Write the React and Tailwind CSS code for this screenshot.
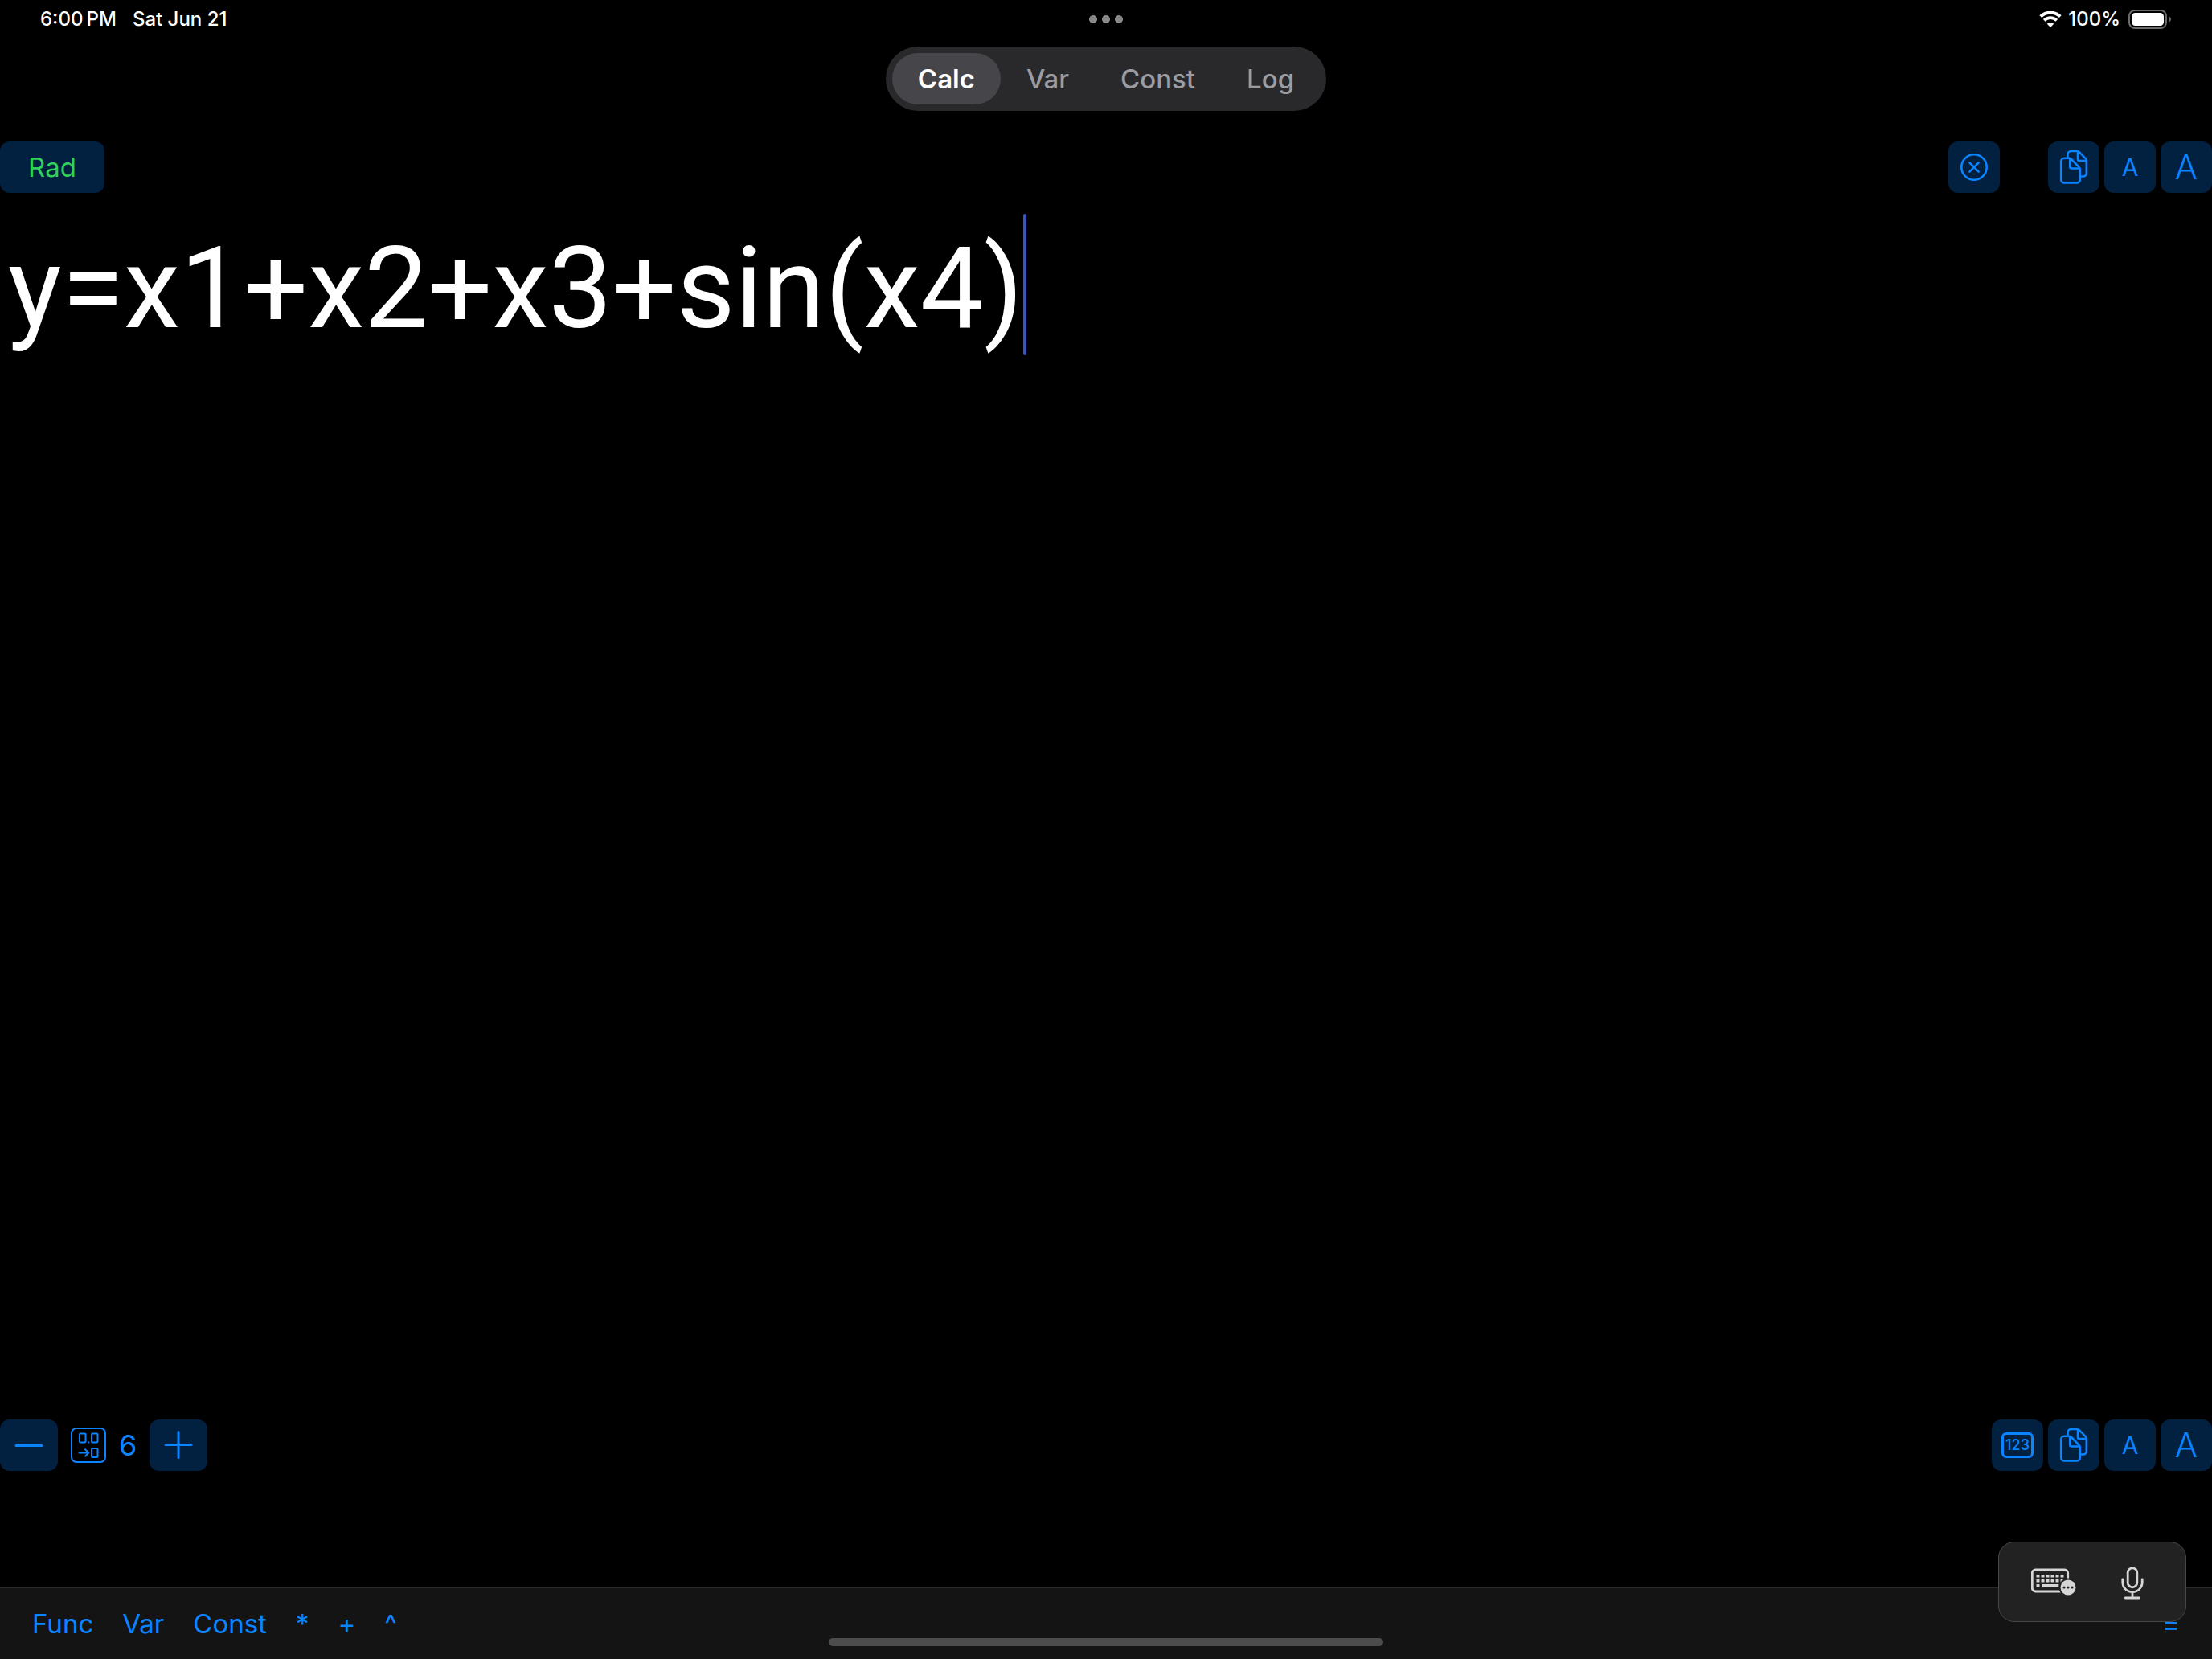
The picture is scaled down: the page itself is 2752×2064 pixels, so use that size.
import { useState } from "react";
import clsx from "clsx";

const TABS = ["Calc", "Var", "Const", "Log"];
const SHORTCUTS = ["Func", "Var", "Const", "*", "+", "^"];

function StatusBar() {
  return (
    <header className="flex items-center h-12 px-[50px] text-2xl font-medium text-white">
      <div className="flex flex-1 gap-5">
        <span>6:00{"\u2009"}PM</span>
        <span>Sat Jun 21</span>
      </div>
      <div className="flex justify-center gap-1.5">
        <span className="size-2.5 rounded-full bg-[#8a8a8a]" />
        <span className="size-2.5 rounded-full bg-[#8a8a8a]" />
        <span className="size-2.5 rounded-full bg-[#8a8a8a]" />
      </div>
      <div className="flex flex-1 items-center justify-end">
        <svg className="w-7 h-5 mr-2" viewBox="0 0 28 20" fill="none">
          <path d="M1.8 6.6a17.6 17.6 0 0 1 24.4 0" stroke="white" strokeWidth="4" />
          <path d="M6.2 11.3a11.4 11.4 0 0 1 15.6 0" stroke="white" strokeWidth="3.8" />
          <path d="M14 20l-4.2-4.2a6 6 0 0 1 8.4 0z" fill="white" />
        </svg>
        <span className="mr-2.5">100%</span>
        <svg className="w-[54px] h-6" viewBox="0 0 54 24" fill="none">
          <rect x="1" y="1" width="46" height="22" rx="7" stroke="#6b6b6b" strokeWidth="2" />
          <rect x="4" y="4" width="40" height="16" rx="4.5" fill="white" />
          <path d="M50 8.5c2.2.6 3 2 3 3.5s-.8 2.9-3 3.5z" fill="#6b6b6b" />
        </svg>
      </div>
    </header>
  );
}

function IconButton({ label, className, onClick, children }) {
  return (
    <button
      type="button"
      aria-label={label}
      onClick={onClick}
      className={clsx(
        "flex items-center justify-center h-16 rounded-xl bg-[#02203f] text-[#0a84ff]",
        className
      )}
    >
      {children}
    </button>
  );
}

function CopyIcon() {
  return (
    <svg
      className="size-16"
      viewBox="0 0 64 64"
      fill="none"
      stroke="currentColor"
      strokeWidth="2.6"
      strokeLinejoin="round"
    >
      <path d="M24.5 20V16a4 4 0 0 1 4-4h7.5a4 4 0 0 1 2.8 1.2l7.8 7.9a4 4 0 0 1 1.2 2.8V39.5a4 4 0 0 1-4 4H41" />
      <path d="M37 12.5V22a2 2 0 0 0 2 2h8.5" />
      <path d="M20.2 20.8h6a4 4 0 0 1 2.8 1.2l9.6 9.8a4 4 0 0 1 1.2 2.8V47.5a4 4 0 0 1-4 4H20.2a4 4 0 0 1-4-4V24.8a4 4 0 0 1 4-4z" />
      <path d="M27.3 21V31.5a2 2 0 0 0 2 2H39.5" />
    </svg>
  );
}

function ClearIcon() {
  return (
    <svg className="size-16" viewBox="0 0 64 64" fill="none" stroke="currentColor" strokeWidth="2.6" strokeLinecap="round">
      <circle cx="32" cy="32" r="15.7" />
      <path d="M26.3 26.3l11.4 11.4M37.7 26.3L26.3 37.7" />
    </svg>
  );
}

function PrecisionIcon() {
  return (
    <svg className="size-11 text-[#0a84ff]" viewBox="0 0 44 44" fill="none" stroke="currentColor" strokeWidth="2">
      <rect x="1" y="1" width="42" height="42" rx="6" />
      <rect x="11" y="7.5" width="7.5" height="11" rx="1" />
      <rect x="26" y="7.5" width="7.5" height="11" rx="1" />
      <rect x="21.2" y="17.5" width="2" height="2" fill="currentColor" stroke="none" />
      <rect x="26" y="26" width="7.5" height="11" rx="1" />
      <path d="M10.5 31.5H22M18 27.3l4.2 4.2L18 35.7" strokeLinecap="round" strokeLinejoin="round" />
    </svg>
  );
}

function TextButtons() {
  return (
    <>
      <IconButton label="Copy" className="w-16">
        <CopyIcon />
      </IconButton>
      <IconButton label="Smaller text" className="w-16 text-[30px]">
        A
      </IconButton>
      <IconButton label="Larger text" className="w-16 text-[42px] font-light">
        A
      </IconButton>
    </>
  );
}

function KeyboardIcon() {
  const columns = [6.5, 12.5, 18.5, 24.5, 30.5, 36.5];
  return (
    <svg className="w-14 h-11" viewBox="0 0 56 44" fill="none">
      <rect x="1.3" y="7" width="44.4" height="27" rx="4" stroke="#d6d6d6" strokeWidth="2.8" />
      {columns.map((x) => (
        <g key={x} fill="#d6d6d6">
          <rect x={x} y="13" width="4" height="3.5" rx="0.5" />
          <rect x={x} y="19" width="4" height="3.5" rx="0.5" />
        </g>
      ))}
      <rect x="6.5" y="25" width="4" height="3.5" rx="0.5" fill="#d6d6d6" />
      <rect x="13" y="25" width="21.5" height="3.5" rx="1" fill="#d6d6d6" />
      <circle cx="46" cy="29" r="11.5" fill="#222222" />
      <circle cx="46" cy="29" r="9.5" fill="#d6d6d6" />
      <circle cx="41" cy="29" r="1.6" fill="#222222" />
      <circle cx="46" cy="29" r="1.6" fill="#222222" />
      <circle cx="51" cy="29" r="1.6" fill="#222222" />
    </svg>
  );
}

function MicIcon() {
  return (
    <svg className="w-7 h-11" viewBox="0 0 28 44" fill="none" stroke="#d6d6d6" strokeWidth="2.8" strokeLinecap="round">
      <rect x="8.2" y="4.8" width="11.6" height="24" rx="5.8" />
      <path d="M1.8 19v3.5a12.2 12.2 0 0 0 24.4 0V19M14 35v7M5.3 42h17.4" />
    </svg>
  );
}

export default function App() {
  const [tab, setTab] = useState("Calc");
  const [expression, setExpression] = useState("y=x1+x2+x3+sin(x4)");
  const [digits, setDigits] = useState(6);

  return (
    <div className="relative flex flex-col min-h-screen overflow-hidden bg-black font-['Inter',sans-serif] text-[33px] leading-none">
      <StatusBar />

      <nav className="flex self-center mt-2.5 p-2 rounded-full bg-[#29292b]">
        {TABS.map((name) => (
          <button
            key={name}
            type="button"
            onClick={() => setTab(name)}
            className={clsx(
              "h-16 px-8 rounded-full",
              name === tab ? "bg-[#464549] font-semibold text-white" : "font-medium text-[#9c9ca1]"
            )}
          >
            {name}
          </button>
        ))}
      </nav>

      <div className="flex items-center gap-1.5 mt-[38px]">
        <button type="button" className="h-16 w-[130px] mr-auto rounded-xl bg-[#02203f] text-[#30d158]">
          Rad
        </button>
        <div className="mr-[54px]">
          <IconButton label="Clear" className="w-16">
            <ClearIcon />
          </IconButton>
        </div>
        <TextButtons />
      </div>

      <main className="flex flex-1 items-start pt-[26px] pl-2.5">
        <input
          aria-label="Expression"
          spellCheck={false}
          value={expression}
          onChange={(e) => setExpression(e.target.value)}
          className="field-sizing-content h-44 pt-2 bg-transparent font-[Roboto,sans-serif] text-[141px] text-white outline-none"
        />
        <span className="w-1 h-44 rounded-full bg-[#3a55c0]" />
      </main>

      <div className="flex items-center gap-1.5 mb-[145px]">
        <div className="flex items-center mr-auto">
          <IconButton
            label="Fewer digits"
            className="w-[72px]"
            onClick={() => setDigits(Math.max(0, digits - 1))}
          >
            <svg className="size-9" viewBox="0 0 36 36" stroke="currentColor" strokeWidth="3" strokeLinecap="round">
              <path d="M2 18.5h32" />
            </svg>
          </IconButton>
          <span className="mx-4">
            <PrecisionIcon />
          </span>
          <output className="w-[22px] mr-4 text-4xl text-[#0a84ff]">{digits}</output>
          <IconButton label="More digits" className="w-[72px]" onClick={() => setDigits(digits + 1)}>
            <svg className="size-9" viewBox="0 0 36 36" stroke="currentColor" strokeWidth="3" strokeLinecap="round">
              <path d="M2 17.5h32M18 1.5v32" />
            </svg>
          </IconButton>
        </div>
        <IconButton label="Number format" className="w-16">
          <span className="flex items-center justify-center w-10 h-8 rounded-md border-3 border-[#0a84ff] text-lg font-medium">
            123
          </span>
        </IconButton>
        <TextButtons />
      </div>

      <footer className="flex items-center justify-between h-[89px] px-10 border-t border-[#2b2b2b] bg-[#131413] text-[#0a84ff]">
        <div className="flex gap-9">
          {SHORTCUTS.map((key) => (
            <button key={key} type="button">
              {key}
            </button>
          ))}
        </div>
        <button type="button">=</button>
      </footer>

      <div className="absolute right-8 bottom-[46px] flex items-center gap-14 h-[100px] w-[234px] pl-10 rounded-[20px] border border-[#474747] bg-[#222222]">
        <button type="button" aria-label="Keyboard">
          <KeyboardIcon />
        </button>
        <button type="button" aria-label="Dictate">
          <MicIcon />
        </button>
      </div>
      <div className="absolute bottom-4 left-1/2 -translate-x-1/2 h-2.5 w-[690px] rounded-full bg-[#4c4c4c]" />
    </div>
  );
}
